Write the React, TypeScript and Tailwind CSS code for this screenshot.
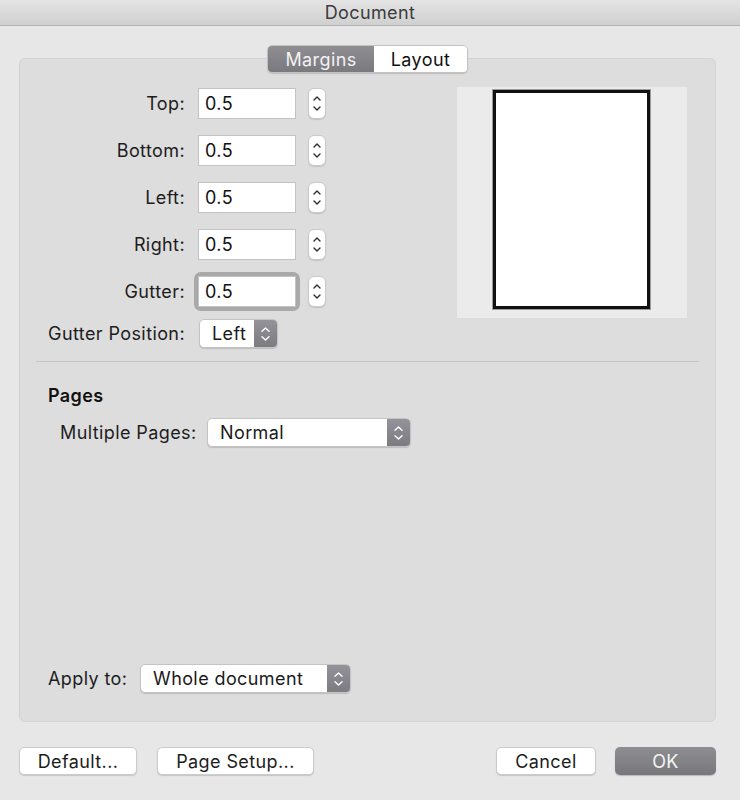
import React from "react";

function Stepper() {
    return (
        <div className="flex h-[31px] w-[18px] flex-col items-center justify-center gap-[5px] rounded-[6px] border border-[#c9c9c9] bg-white shadow-[0_1px_1px_rgba(0,0,0,0.12)]">
            <svg width="8" height="5" viewBox="0 0 8 5">
                <path d="M1 4 L4 1 L7 4" fill="none" stroke="#2c2c2c" strokeWidth="1.4" strokeLinecap="round" strokeLinejoin="round" />
            </svg>
            <svg width="8" height="5" viewBox="0 0 8 5">
                <path d="M1 1 L4 4 L7 1" fill="none" stroke="#2c2c2c" strokeWidth="1.4" strokeLinecap="round" strokeLinejoin="round" />
            </svg>
        </div>
    );
}

function NumberField({ focused }: { focused?: boolean }) {
    return (
        <div className={`rounded-[3px] ${focused ? "ring-[4px] ring-[#a9a9a9]" : ""}`}>
            <div className="flex h-[31px] w-[98px] items-center border border-[#c3c3c3] bg-white pl-[6px] text-[18px] text-[#111]">
                0.5
            </div>
        </div>
    );
}

function PopUp({ value, width }: { value: string; width: string }) {
    return (
        <div className={`flex h-[29px] ${width} overflow-hidden rounded-[5px] border border-[#c4c4c4] bg-white shadow-[0_1px_1px_rgba(0,0,0,0.15)]`}>
            <div className="flex flex-1 items-center pl-[12px] text-[18px] text-[#1a1a1a]">{value}</div>
            <div className="flex w-[23px] flex-col items-center justify-center gap-[4px] bg-gradient-to-b from-[#94939a] to-[#7c7b80]">
                <svg width="9" height="5" viewBox="0 0 9 5">
                    <path d="M1 4.2 L4.5 1 L8 4.2" fill="none" stroke="#fff" strokeWidth="1.4" strokeLinecap="round" strokeLinejoin="round" />
                </svg>
                <svg width="9" height="5" viewBox="0 0 9 5">
                    <path d="M1 0.8 L4.5 4 L8 0.8" fill="none" stroke="#fff" strokeWidth="1.4" strokeLinecap="round" strokeLinejoin="round" />
                </svg>
            </div>
        </div>
    );
}

function MarginRow({ label, focused }: { label: string; focused?: boolean }) {
    return (
        <div className="flex items-center">
            <div className="w-[137px] whitespace-nowrap text-right text-[18px] text-[#1c1c1c]">{label}</div>
            <div className="ml-[13px]">
                <NumberField focused={focused} />
            </div>
            <div className="ml-[12px]">
                <Stepper />
            </div>
        </div>
    );
}

function PushButton({ label, width }: { label: string; width: string }) {
    return (
        <button className={`h-[28px] ${width} rounded-[5px] border border-[#cbcbcb] bg-white text-[18px] text-[#1c1c1c] shadow-[0_1px_1px_rgba(0,0,0,0.15)]`}>
            {label}
        </button>
    );
}

export default function App() {
    return (
        <div className="flex h-[800px] w-[740px] flex-col bg-[#e7e7e7] font-['Inter','Liberation_Sans',Arial,sans-serif] tracking-[0.4px]">
            <div className="h-[26px] border-b border-[#b3b3b3] bg-gradient-to-b from-[#e4e4e4] to-[#d0d0d0] text-center text-[18px] leading-[25px] text-[#3b3b3b]">
                Document
            </div>

            <div className="flex flex-col pl-[19px] pr-[24px] pt-[19px]">
                {/* tabs */}
                <div className="relative z-10 mb-[-15px] flex justify-center">
                    <div className="flex h-[28px] overflow-hidden rounded-[5px] border border-[#c2c2c2] shadow-[0_1px_1px_rgba(0,0,0,0.15)]">
                        <div className="flex w-[106px] items-center justify-center bg-gradient-to-b from-[#8f8e93] to-[#7a797e] text-[18px] text-[#f2f2f2]">
                            Margins
                        </div>
                        <div className="flex w-[93px] items-center justify-center bg-white text-[18px] text-[#111]">
                            Layout
                        </div>
                    </div>
                </div>

                {/* panel */}
                <div className="flex h-[664px] flex-col rounded-[6px] border border-[#d3d3d3] bg-[#dddddd] pt-[29px]">
                    <div className="flex">
                        <div className="flex flex-col gap-[16px] pl-[28px]">
                            <MarginRow label="Top:" />
                            <MarginRow label="Bottom:" />
                            <MarginRow label="Left:" />
                            <MarginRow label="Right:" />
                            <MarginRow label="Gutter:" focused />
                            <div className="mt-[-4px] flex items-center">
                                <div className="w-[137px] whitespace-nowrap text-right text-[18px] text-[#1c1c1c]">Gutter Position:</div>
                                <div className="ml-[14px]">
                                    <PopUp value="Left" width="w-[79px]" />
                                </div>
                            </div>
                        </div>
                        <div className="ml-auto mr-[28px] mt-[-1px] flex h-[231px] w-[230px] justify-center bg-[#ebebeb] pt-[3px]">
                            <div className="ml-[-1px] h-[219px] w-[157px] border-[3px] border-[#111] bg-white shadow-[0_0_0_1px_#9a9a9a]" />
                        </div>
                    </div>

                    <div className="mx-[16px] mt-[13px] h-px bg-[#c6c6c6]" />

                    <div className="mt-[20px] pl-[28px] text-[18px] font-semibold text-[#111]">Pages</div>
                    <div className="mt-[9px] flex items-center pl-[40px]">
                        <div className="w-[147px] whitespace-nowrap text-[18px] text-[#1c1c1c]">Multiple Pages:</div>
                        <PopUp value="Normal" width="w-[204px]" />
                    </div>

                    <div className="flex-1" />

                    <div className="flex items-center pb-[28px] pl-[28px]">
                        <div className="w-[92px] text-[18px] text-[#1c1c1c]">Apply to:</div>
                        <PopUp value="Whole document" width="w-[211px]" />
                    </div>
                </div>

                {/* footer */}
                <div className="mt-[25px] flex items-center">
                    <PushButton label="Default..." width="w-[118px]" />
                    <div className="ml-[20px]">
                        <PushButton label="Page Setup..." width="w-[157px]" />
                    </div>
                    <div className="ml-auto">
                        <PushButton label="Cancel" width="w-[100px]" />
                    </div>
                    <button className="ml-[19px] h-[28px] w-[101px] rounded-[5px] bg-gradient-to-b from-[#8e8d92] to-[#78777c] text-[18px] text-[#f4f4f4] shadow-[0_1px_1px_rgba(0,0,0,0.2)]">
                        OK
                    </button>
                </div>
            </div>
        </div>
    );
}
